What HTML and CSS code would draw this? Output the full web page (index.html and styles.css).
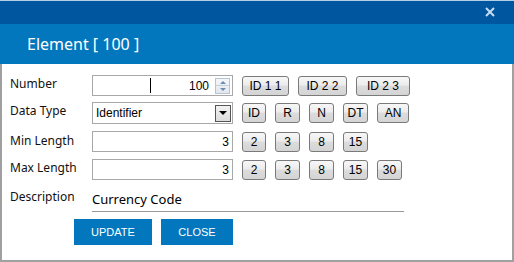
FILE: index.html
```html
<!DOCTYPE html>
<html>
<head>
<meta charset="utf-8">
<link rel="stylesheet" href="styles.css">
</head>
<body>
<div class="dialog">
  <div class="topline"></div>
  <div class="titlebar">
    <svg class="close" width="10" height="10" viewBox="0 0 10 10"><path d="M1 1 L9 9 M9 1 L1 9" stroke="#c6dcef" stroke-width="2" fill="none"/></svg>
  </div>
  <div class="header">Element [ 100 ]</div>
  <div class="body">
    <div class="row r1">
      <div class="label">Number</div>
      <div class="field num">
        <span class="ibeam"></span>
        <span class="val">100</span>
        <span class="spin"><span class="up"></span><span class="down"></span></span>
      </div>
      <div class="btns">
        <span class="btn w47">ID 1 1</span>
        <span class="btn w49">ID 2 2</span>
        <span class="btn w54">ID 2 3</span>
      </div>
    </div>
    <div class="row r2">
      <div class="label">Data Type</div>
      <div class="field sel">
        <span class="txt">Identifier</span>
        <span class="dd"><span class="tri"></span></span>
      </div>
      <div class="btns">
        <span class="btn w24">ID</span>
        <span class="btn">R</span>
        <span class="btn">N</span>
        <span class="btn">DT</span>
        <span class="btn w32">AN</span>
      </div>
    </div>
    <div class="row r3">
      <div class="label">Min Length</div>
      <div class="field num"><span class="val">3</span></div>
      <div class="btns">
        <span class="btn w24">2</span>
        <span class="btn">3</span>
        <span class="btn">8</span>
        <span class="btn">15</span>
      </div>
    </div>
    <div class="row r4">
      <div class="label">Max Length</div>
      <div class="field num"><span class="val">3</span></div>
      <div class="btns">
        <span class="btn w24">2</span>
        <span class="btn">3</span>
        <span class="btn">8</span>
        <span class="btn">15</span>
        <span class="btn">30</span>
      </div>
    </div>
    <div class="row r5">
      <div class="label">Description</div>
      <div class="desc">Currency Code</div>
    </div>
    <div class="actions">
      <span class="action w78">UPDATE</span>
      <span class="action w72">CLOSE</span>
    </div>
  </div>
</div>
</body>
</html>
```
FILE: styles.css
```css
* { box-sizing: border-box; }
html, body { margin: 0; padding: 0; background: #fff; }
body { width: 514px; height: 262px; overflow: hidden; font-family: "Noto Sans", sans-serif; }
.dialog { width: 514px; height: 262px; display: flex; flex-direction: column; }
.topline { height: 1px; background: #b3cfe6; }
.titlebar { height: 23px; background: #00579f; display: flex; justify-content: flex-end; align-items: flex-start; padding: 6px 19px 0 0; }
.close { display: block; }
.header { height: 40px; background: #0277bd; color: #fff; font-size: 16px; line-height: 40px; padding-left: 27px; }
.body { flex: 1; border: 2px solid #a0a0a0; border-top: none; padding: 11px 0 0 8px; }
.row { display: flex; align-items: center; }
.r2 { margin-top: 6px; }
.r3 { margin-top: 7px; }
.r4 { margin-top: 7px; }
.r5 { margin-top: 9px; align-items: flex-start; }
.label { width: 82px; font-size: 12px; color: #111; line-height: 16px; }
.r1 .label { margin-top: -4px; }
.r2 .label { margin-top: -4px; }
.r3 .label { margin-top: -2px; }
.r4 .label { margin-top: -4px; }
.field { position: relative; width: 141px; height: 21px; border: 1px solid #a8a8a8; background: #fff; display: flex; align-items: center; font-family: "Liberation Sans", sans-serif; font-size: 12px; color: #000; }
.num { justify-content: flex-end; padding-right: 3px; }
.r1 .num { padding-right: 2px; }
.r1 .val { margin-right: 6px; }
.ibeam { position: absolute; left: 57px; top: 2px; width: 1px; height: 15px; background: #000; }
.spin { width: 15px; height: 16px; border: 1px solid #b8c4d2; display: flex; flex-direction: column; background: linear-gradient(#f4f6f9, #e3e8ee); }
.spin .up, .spin .down { flex: 1; position: relative; }
.spin .up { border-bottom: 1px solid #c6ced8; }
.spin .up::after { content: ""; position: absolute; left: 4px; top: 2px; border-left: 3px solid transparent; border-right: 3px solid transparent; border-bottom: 3px solid #6d8bb0; }
.spin .down::after { content: ""; position: absolute; left: 4px; top: 2px; border-left: 3px solid transparent; border-right: 3px solid transparent; border-top: 3px solid #6d8bb0; }
.sel { height: 22px; justify-content: space-between; padding: 0 1px 0 3px; }
.dd { width: 16px; height: 17px; border: 1px solid #555; background: linear-gradient(#f2f2f2, #dcdcdc); display: flex; align-items: center; justify-content: center; }
.tri { width: 0; height: 0; border-left: 4px solid transparent; border-right: 4px solid transparent; border-top: 4px solid #000; }
.btns { display: flex; margin-left: 9px; gap: 9px; }
.btn { width: 25px; height: 20px; border: 1px solid #7a7a7a; border-radius: 3px; background: linear-gradient(#f7f7f7 0%, #ececec 45%, #dcdcdc 50%, #d4d4d4 100%); font-family: "Liberation Sans", sans-serif; font-size: 12px; color: #000; display: flex; align-items: center; justify-content: center; }
.w24 { width: 24px; }
.w32 { width: 32px; }
.w47 { width: 47px; }
.w49 { width: 49px; }
.w54 { width: 54px; }
.desc { width: 312px; height: 25px; border-bottom: 1px solid #999; font-size: 13px; line-height: 20px; padding-top: 2px; color: #000; margin-top: -2px; }
.actions { display: flex; gap: 9px; margin: 7px 0 0 64px; }
.action { height: 26px; background: #0277bd; color: #fff; font-family: "Liberation Sans", sans-serif; font-size: 11px; display: flex; align-items: center; justify-content: center; }
.w78 { width: 78px; }
.w72 { width: 72px; }
```
